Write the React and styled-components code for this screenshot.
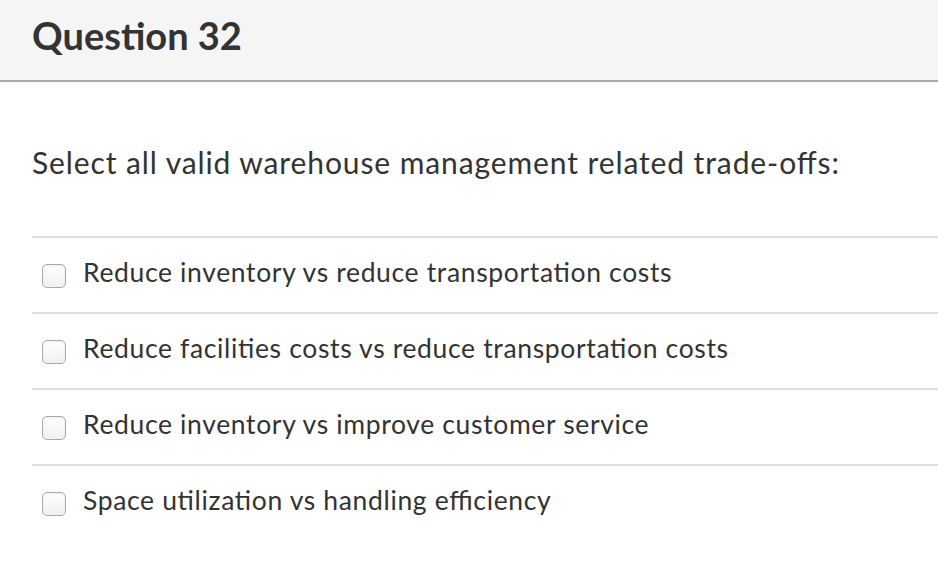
import React from "react";
import styled, { createGlobalStyle } from "styled-components";

const Global = createGlobalStyle`
  html, body { margin: 0; padding: 0; background: #ffffff; }
  body { font-family: Lato, "Open Sans", sans-serif; color: #333333; }
`;

const Page = styled.div`
  width: 938px;
  min-height: 568px;
  background: #ffffff;
`;

const Header = styled.header`
  height: 82px;
  box-sizing: border-box;
  background: #f5f5f5;
  border-bottom: 2px solid #aaaaaa;
  padding: 16px 0 0 32px;
`;

const Title = styled.h2`
  margin: 0;
  font-family: Lato, sans-serif;
  font-weight: 700;
  font-size: 38px;
  line-height: 38px;
  color: #333333;
`;

const Body = styled.section`
  padding: 0 0 0 32px;
`;

const Prompt = styled.p`
  margin: 0;
  padding-top: 65px;
  height: 154px;
  box-sizing: border-box;
  font-size: 30px;
  line-height: 30px;
  letter-spacing: 0.9px;
  font-variant-ligatures: common-ligatures;
  font-feature-settings: "liga" 1;
  color: #333333;
`;

const Answers = styled.ul`
  list-style: none;
  margin: 0;
  padding: 0;
`;

const Answer = styled.li`
  height: 74px;
  border-top: 2px solid #dddddd;
  display: flex;
  align-items: center;
  padding-left: 10px;
  gap: 17px;
`;

const Box = styled.span`
  width: 24px;
  height: 24px;
  box-sizing: border-box;
  border: 1px solid #a9a9a9;
  border-radius: 5px;
  background: linear-gradient(#ffffff, #f0f0f0);
  box-shadow: inset 0 1px 2px rgba(0, 0, 0, 0.08);
  flex: none;
  margin-top: 1px;
`;

const Label = styled.span`
  font-size: 26.5px;
  letter-spacing: 0.65px;
  font-variant-ligatures: common-ligatures;
  font-feature-settings: "liga" 1;
  padding-bottom: 7px;
  color: #333333;
`;

const options = [
  "Reduce inventory vs reduce transportation costs",
  "Reduce facilities costs vs reduce transportation costs",
  "Reduce inventory vs improve customer service",
  "Space utilization vs handling efficiency",
];

export default function App() {
  return (
    <Page>
      <Global />
      <Header>
        <Title>Question 32</Title>
      </Header>
      <Body>
        <Prompt>Select all valid warehouse management related trade-offs:</Prompt>
        <Answers>
          {options.map((o) => (
            <Answer key={o}>
              <Box />
              <Label>{o}</Label>
            </Answer>
          ))}
        </Answers>
      </Body>
    </Page>
  );
}
